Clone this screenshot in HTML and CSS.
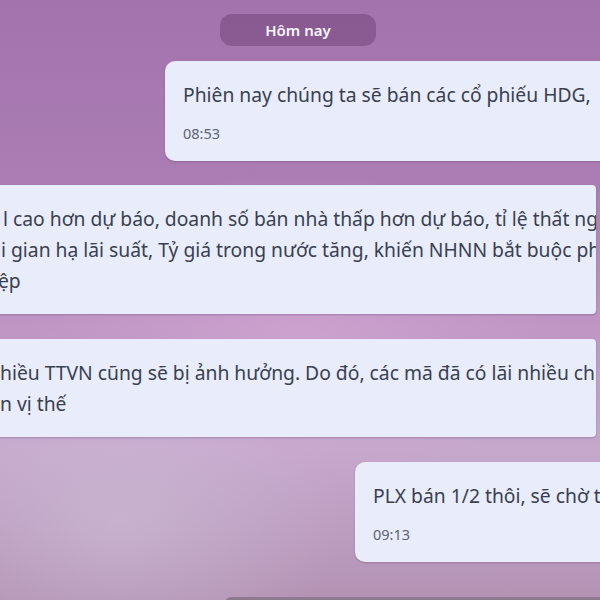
FILE: index.html
```html
<!DOCTYPE html>
<html lang="vi">
<head>
<meta charset="utf-8">
<link rel="stylesheet" href="styles.css">
</head>
<body>
<div class="chat">
  <div class="day">Hôm nay</div>

  <div class="bubble out b1">
    <div class="text">Phiên nay chúng ta sẽ bán các cổ phiếu HDG,</div>
    <div class="time">08:53</div>
  </div>

  <div class="bubble in b2">
    <div class="text">
      <div class="line l1">l cao hơn dự báo, doanh số bán nhà thấp hơn dự báo, tỉ lệ thất nghiệp</div>
      <div class="line l2">i gian hạ lãi suất, Tỷ giá trong nước tăng, khiến NHNN bắt buộc phải</div>
      <div class="line l3">ệp</div>
    </div>
  </div>

  <div class="bubble in b3">
    <div class="text">
      <div class="line l4">hiều TTVN cũng sẽ bị ảnh hưởng. Do đó, các mã đã có lãi nhiều chúng</div>
      <div class="line l5">n vị thế</div>
    </div>
  </div>

  <div class="bubble out b4">
    <div class="text">PLX bán 1/2 thôi, sẽ chờ tăng</div>
    <div class="time">09:13</div>
  </div>

  <div class="composer"></div>
</div>
</body>
</html>
```

FILE: styles.css
```css
html, body {
  margin: 0;
  padding: 0;
  width: 600px;
  height: 600px;
  overflow: hidden;
}

body {
  font-family: "Noto Sans", "Open Sans", sans-serif;
  background:
    radial-gradient(ellipse 380px 220px at 300px 330px, rgba(214, 170, 214, 0.55), rgba(214, 170, 214, 0) 70%),
    radial-gradient(ellipse 300px 200px at 120px 520px, rgba(206, 190, 216, 0.6), rgba(206, 190, 216, 0) 75%),
    linear-gradient(180deg, #a273ad 0%, #ab7db4 30%, #bf96c4 55%, #c6a8cc 75%, #b392b4 100%);
}

.chat {
  display: flex;
  flex-direction: column;
  align-items: flex-start;
  padding-top: 14px;
  height: 600px;
  box-sizing: border-box;
  position: relative;
}

.day {
  margin-left: 220px;
  width: 156px;
  height: 32px;
  border-radius: 12px;
  background: rgba(98, 52, 104, 0.4);
  color: #fbf6fc;
  font-size: 15px;
  font-weight: 600;
  display: flex;
  align-items: center;
  justify-content: center;
}

.bubble {
  background: #e8ecfb;
  border-radius: 10px;
  box-shadow: 0 1px 2px rgba(60, 30, 70, 0.25);
  color: #394050;
  box-sizing: border-box;
  padding: 18px 18px 18px;
  white-space: nowrap;
  overflow: hidden;
}

.text {
  font-size: 19.3px;
  line-height: 31px;
}

.time {
  font-size: 14.5px;
  line-height: 18px;
  color: #5c6372;
  margin-top: 14px;
}

.out {
  width: 520px;
  flex: none;
}

.b1 {
  margin-top: 15px;
  margin-left: 165px;
  padding-bottom: 19px;
}

.in {
  margin-left: -20px;
  width: 616px;
  border-radius: 0 4px 4px 0;
  padding-left: 20px;
}

.b2 {
  margin-top: 24px;
}

.b3 {
  margin-top: 25px;
}

.b4 {
  margin-top: 25px;
  margin-left: 355px;
  padding-bottom: 19px;
}

.l1 { margin-left: 3px; }
.l2 { margin-left: 1px; }
.l3 { margin-left: -2px; }
.l4 { margin-left: 0; }
.l5 { margin-left: 0; }

.composer {
  position: absolute;
  left: 225px;
  top: 597px;
  width: 400px;
  height: 10px;
  border-radius: 6px 0 0 0;
  background: #8e7a8e;
}
```
